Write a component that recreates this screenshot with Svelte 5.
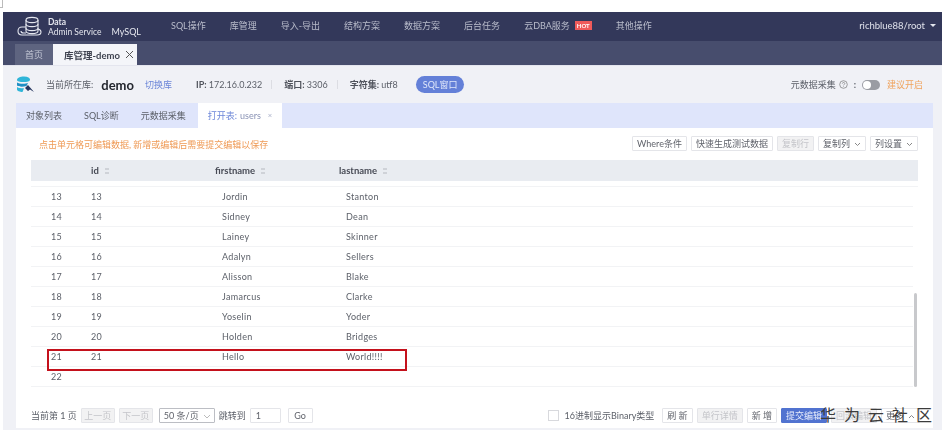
<script>
  const nav = ['SQL操作', '库管理', '导入-导出', '结构方案', '数据方案', '后台任务'];
  const rows = [
    [13, 'Jordin', 'Stanton'],
    [14, 'Sidney', 'Dean'],
    [15, 'Lainey', 'Skinner'],
    [16, 'Adalyn', 'Sellers'],
    [17, 'Alisson', 'Blake'],
    [18, 'Jamarcus', 'Clarke'],
    [19, 'Yoselin', 'Yoder'],
    [20, 'Holden', 'Bridges'],
    [21, 'Hello', 'World!!!!'],
    [22, '', '']
  ];
</script>

<div class="corner"></div>
<div class="page">
  <header class="topbar">
    <div class="brand">
      <svg width="26" height="22" viewBox="0 0 26 22" fill="none" stroke="#e4e6ee" stroke-width="1.1">
        <ellipse cx="15" cy="4" rx="6" ry="2.6" />
        <path d="M9 4v11c0 1.5 2.7 2.6 6 2.6s6-1.100 6-2.600V4" />
        <path d="M9 8c0 1.500 2.700 2.600 6 2.600s6-1.100 6-2.600M9 12c0 1.500 2.700 2.600 6 2.600s6-1.100 6-2.600" />
        <path d="M9 11H5c-2.500 0-4 1.800-4 4s1.500 4 4 4h15c2.500 0 4-1.200 4-3 0-1.500-1-2.500-3-3" />
        <path d="M4 15c0 1.200 1 2 2.500 2H9" />
      </svg>
      <div class="brand-name"><b>Data</b><span>Admin Service</span></div>
      <span class="engine">MySQL</span>
    </div>
    <nav class="nav">
      {#each nav as item}
        <span>{item}</span>
      {/each}
      <span class="cloud">云DBA服务<em>HOT</em></span>
      <span>其他操作</span>
    </nav>
    <div class="user">richblue88/root<i></i></div>
  </header>

  <div class="pagetabs">
    <span class="home">首页</span>
    <span class="current">库管理-demo<svg width="9" height="9" viewBox="0 0 9 9" stroke="#555" fill="none"><path d="M1 1l7 7M8 1L1 8" /></svg></span>
  </div>

  <main class="main">
    <div class="info">
      <svg class="logo" width="19" height="17" viewBox="0 0 19 17">
        <path d="M1 4c0-2 3-3.500 7-3.500S14 2 14 3.500C14 5.500 11 6 7.500 6S1 5.500 1 4z" fill="#2fb5d8" />
        <path d="M1 6.500c2 1.500 8 1.800 11 .5l-1.500 3C7 11 3 11 1 9.500z" fill="#1f8fc4" />
        <path d="M1 11c2 1.300 5 1.500 7 1.300L6.500 16C4 16 1 15 1 13.500z" fill="#2fb5d8" />
        <path d="M9 12l3-3 6 7-4-2.500-2 1.500z" fill="#26365f" />
      </svg>
      <span class="label">当前所在库:</span>
      <b class="dbname">demo</b>
      <a class="switch" href="#top">切换库</a>
      <span class="meta first"><b>IP:</b> 172.16.0.232</span>
      <span class="sep"></span>
      <span class="meta"><b>端口:</b> 3306</span>
      <span class="sep"></span>
      <span class="meta"><b>字符集:</b> utf8</span>
      <span class="sqlbtn">SQL窗口</span>
      <div class="collect">
        元数据采集
        <svg width="9" height="9" viewBox="0 0 9 9" fill="none" stroke="#777" stroke-width=".7"><circle cx="4.500" cy="4.500" r="3.800" /><path d="M3.300 3.600c0-1.500 2.500-1.500 2.500 0 0 .9-1.300.9-1.300 1.800M4.500 6.300v.6" /></svg>
        <span class="colon">:</span>
        <span class="toggle"><i></i></span>
        <span class="advice">建议开启</span>
      </div>
    </div>

    <div class="tabs">
      <span>对象列表</span>
      <span>SQL诊断</span>
      <span>元数据采集</span>
      <span class="open">打开表: <u>users</u><svg width="7" height="7" viewBox="0 0 7 7" stroke="#8a93b5" fill="none"><path d="M.7.700l5.600 5.600M6.300.700L.7 6.300" /></svg></span>
    </div>

    <section class="panel">
      <div class="toolbar">
        <span class="hint">点击单元格可编辑数据, 新增或编辑后需要提交编辑以保存</span>
        <div class="tools">
          <span class="btn">Where条件</span>
          <span class="btn">快速生成测试数据</span>
          <span class="btn off">复制行</span>
          <span class="btn">复制列<svg class="chev" width="7" height="5" viewBox="0 0 7 5" fill="none" stroke="#888"><path d="M1 1l2.500 2.500L6 1" /></svg></span>
          <span class="btn">列设置<svg class="chev" width="7" height="5" viewBox="0 0 7 5" fill="none" stroke="#888"><path d="M1 1l2.500 2.500L6 1" /></svg></span>
        </div>
      </div>

      <div class="thead">
        <span class="c-no"></span>
        <span class="c-id">id<i class="sort"></i></span>
        <span class="c-first">firstname<i class="sort"></i></span>
        <span class="c-last">lastname<i class="sort"></i></span>
      </div>

      <div class="tbody">
        {#each rows as row}
          <div class="row">
            <span class="c-no">{row[0]}</span>
            <span class="c-id">{row[1] ? row[0] : ''}</span>
            <span class="c-first">{row[1]}</span>
            <span class="c-last">{row[2]}</span>
          </div>
        {/each}
        <div class="scrollbar"></div>
        <div class="mark"></div>
      </div>

      <footer class="footer">
        <span>当前第 1 页</span>
        <span class="btn off wide">上一页</span>
        <span class="btn off wide">下一页</span>
        <span class="btn select">50 条/页<svg class="chev" width="8" height="5" viewBox="0 0 8 5" fill="none" stroke="#bbb"><path d="M1 1l3 3 3-3" /></svg></span>
        <span>跳转到</span>
        <span class="btn input">1</span>
        <span class="btn go">Go</span>
        <div class="actions">
          <span class="check"></span>
          <span class="hex">16进制显示Binary类型</span>
          <span class="btn">刷 新</span>
          <span class="btn off">单行详情</span>
          <span class="btn">新 增</span>
          <span class="btn primary">提交编辑</span>
          <span class="btn off">回滚编辑</span>
          <span class="btn more">更多<svg class="chev" width="7" height="5" viewBox="0 0 7 5" fill="none" stroke="#888"><path d="M1 4l2.500-2.500L6 4" /></svg></span>
        </div>
      </footer>
    </section>
  </main>
</div>
<div class="watermark"><span>华</span><span>为</span><span>云</span><span>社</span><span>区</span></div>

<style>
  :global(body) {
    margin: 0;
    background: #fff;
  }
  :global(#app) {
    position: relative;
    height: 440px;
    overflow: hidden;
    font-family: Lato, "Noto Sans CJK SC", sans-serif;
    font-size: 9px;
    color: #5c6069;
  }
  .corner {
    position: absolute;
    left: 0;
    top: 0;
    width: 2px;
    height: 7px;
    border-right: 1px solid #bbb;
    border-bottom: 1px solid #bbb;
  }
  .page {
    margin: 12px 0 0 3px;
    height: 418px;
    display: flex;
    flex-direction: column;
    filter: blur(0.35px);
  }
  .topbar {
    height: 29px;
    flex: none;
    display: flex;
    align-items: center;
    background: #33385a;
    color: #b9bccb;
  }
  .brand {
    display: flex;
    align-items: center;
    width: 168px;
    padding-left: 14px;
    box-sizing: border-box;
    color: #e4e6ee;
  }
  .brand-name {
    display: flex;
    flex-direction: column;
    line-height: 10px;
    margin-left: 5px;
    font-size: 8.500px;
  }
  .brand-name span {
    white-space: nowrap;
  }
  .engine {
    margin: 9px 0 0 10px;
  }
  .nav {
    display: flex;
    gap: 24px;
    white-space: nowrap;
    margin-top: -2px;
  }
  .nav em {
    font-style: normal;
    font-size: 6px;
    font-weight: 700;
    color: #fff;
    background: #ef5a5a;
    padding: 1px 2px;
    margin-left: 5px;
    vertical-align: 1px;
  }
  .user {
    margin: -2px 0 0 auto;
    padding-right: 6px;
    color: #dfe1ea;
    font-size: 9.500px;
  }
  .user i {
    display: inline-block;
    border: 3px solid transparent;
    border-top: 3px solid #e4e6ee;
    border-bottom: 0;
    margin-left: 5px;
    vertical-align: 2px;
  }
  .pagetabs {
    height: 24px;
    flex: none;
    display: flex;
    align-items: flex-end;
    padding-left: 12px;
    background: #474d6d;
    box-sizing: border-box;
  }
  .pagetabs span {
    height: 21px;
    display: flex;
    align-items: center;
    box-sizing: border-box;
  }
  .home {
    width: 38px;
    justify-content: center;
    background: #5e6480;
    color: #c6c9d6;
  }
  .current {
    width: 84px;
    padding-left: 11px;
    background: #f4f5f9;
    color: #3f4350;
    font-weight: 700;
    font-size: 9.500px;
    gap: 5px;
  }
  .main {
    flex: 1;
    display: flex;
    flex-direction: column;
    min-height: 0;
    background: #f0f1f6;
    padding: 0 9px 2px 13px;
    border-top: 1px solid #e4e5ee;
  }
  .info {
    height: 37px;
    flex: none;
    display: flex;
    align-items: center;
    white-space: nowrap;
  }
  .logo {
    margin-right: 11px;
  }
  .dbname {
    margin: 0 11px 0 8px;
    font-size: 13px;
    color: #23262e;
  }
  .switch {
    color: #6c86d8;
    text-decoration: none;
  }
  .meta b {
    color: #50535c;
  }
  .meta.first {
    margin-left: 24px;
  }
  .sep {
    width: 1px;
    height: 9px;
    background: #dcdde3;
    margin: 0 12px 0 9px;
  }
  .sqlbtn {
    margin-left: 18px;
    height: 17px;
    line-height: 17px;
    padding: 0 7px;
    border-radius: 9px;
    background: #6480d8;
    color: #dfe6fa;
  }
  .collect {
    margin-left: auto;
    margin-right: 10px;
    display: flex;
    align-items: center;
    gap: 3px;
  }
  .colon {
    margin: 0 3px;
    font-weight: 700;
  }
  .toggle {
    width: 18px;
    height: 10px;
    border-radius: 5px;
    background: #9a9ca3;
    display: flex;
    align-items: center;
    padding-left: 1px;
    box-sizing: border-box;
  }
  .toggle i {
    width: 8px;
    height: 8px;
    border-radius: 50%;
    background: #fff;
  }
  .advice {
    margin-left: 4px;
    color: #f0a35c;
  }
  .tabs {
    height: 25px;
    flex: none;
    display: flex;
    align-items: stretch;
    background: #dfe5fb;
  }
  .tabs span {
    display: flex;
    align-items: center;
    padding: 0 10px;
    white-space: nowrap;
    margin-right: 2px;
  }
  .tabs span:first-child {
    padding-left: 10px;
  }
  .tabs .open {
    width: 84px;
    box-sizing: border-box;
    margin-left: 0;
    background: #fff;
    color: #6c86d8;
    gap: 3px;
  }
  .tabs u {
    text-decoration: none;
    color: #8a93b5;
    margin-right: 4px;
  }
  .panel {
    flex: 1;
    min-height: 0;
    display: flex;
    flex-direction: column;
    background: #fff;
    padding: 0 15px;
  }
  .toolbar {
    height: 32px;
    flex: none;
    display: flex;
    align-items: center;
    justify-content: space-between;
    padding-left: 8px;
  }
  .hint {
    color: #ef9a55;
  }
  .tools {
    display: flex;
    gap: 4px;
    margin-top: -2px;
  }
  .btn {
    height: 15px;
    line-height: 14px;
    box-sizing: border-box;
    border: 1px solid #e4e5e9;
    border-radius: 1px;
    padding: 0 4px;
    background: #fff;
    white-space: nowrap;
    color: #60636b;
  }
  .btn.off {
    background: #f2f2f3;
    color: #c4c5c9;
  }
  .chev {
    margin-left: 4px;
  }
  .thead {
    height: 21px;
    flex: none;
    display: flex;
    align-items: center;
    background: #e9ecf1;
    font-weight: 700;
    font-size: 9.500px;
    color: #474a55;
  }
  .c-no {
    width: 60px;
    padding-left: 20px;
    box-sizing: border-box;
    flex: none;
  }
  .c-id {
    width: 124px;
    flex: none;
    box-sizing: border-box;
    display: flex;
    align-items: center;
  }
  .c-first {
    width: 124px;
    flex: none;
    display: flex;
    align-items: center;
  }
  .c-last {
    flex: 1;
    display: flex;
    align-items: center;
  }
  .thead .c-id {
    padding-left: 0;
  }
  .sort {
    display: inline-block;
    width: 4px;
    height: 6px;
    margin-left: 6px;
    border-top: 2px solid #cfd2d8;
    border-bottom: 2px solid #cfd2d8;
    box-sizing: border-box;
  }
  .tbody {
    position: relative;
    flex: none;
    margin-top: 5px;
    padding-right: 5px;
    border-top: 1px solid #f2f3f5;
    letter-spacing: .3px;
  }
  .row {
    height: 20px;
    box-sizing: border-box;
    display: flex;
    align-items: center;
    border-bottom: 1px solid #f2f3f5;
  }
  .row .c-first,
  .row .c-last {
    padding-left: 7px;
    box-sizing: border-box;
  }
  .row .c-no {
    padding-left: 20px;
  }
  .scrollbar {
    position: absolute;
    right: 1px;
    bottom: 0;
    width: 3px;
    height: 94px;
    border-radius: 2px;
    background: #c8c9cc;
  }
  .mark {
    position: absolute;
    left: 16px;
    top: 162px;
    width: 360px;
    height: 22px;
    box-sizing: border-box;
    border: 2px solid #c4111c;
  }
  .footer {
    margin-top: auto;
    height: 25px;
    flex: none;
    display: flex;
    align-items: center;
    gap: 4px;
    white-space: nowrap;
  }
  .wide {
    width: 34px;
    padding: 0;
    text-align: center;
  }
  .select {
    margin-left: 2px;
    border-color: #bcbec4;
    padding: 0 3px 0 4px;
    height: 15px;
  }
  .input {
    width: 31px;
    padding-left: 5px;
  }
  .go {
    width: 25px;
    padding: 0;
    text-align: center;
    margin-left: 3px;
  }
  .actions {
    margin-left: auto;
    display: flex;
    align-items: center;
    gap: 4px;
    margin-right: -2px;
  }
  .check {
    width: 9px;
    height: 9px;
    border: 1px solid #d8d9dd;
  }
  .hex {
    margin: 0 4px 0 2px;
  }
  .primary {
    background: #5173d0;
    border-color: #5173d0;
    color: #e8edfb;
  }
  .watermark {
    position: absolute;
    left: 820px;
    top: 405px;
    display: flex;
    gap: 8px;
    font-size: 16px;
    line-height: 20px;
    color: #3c3c3c;
  }
</style>
